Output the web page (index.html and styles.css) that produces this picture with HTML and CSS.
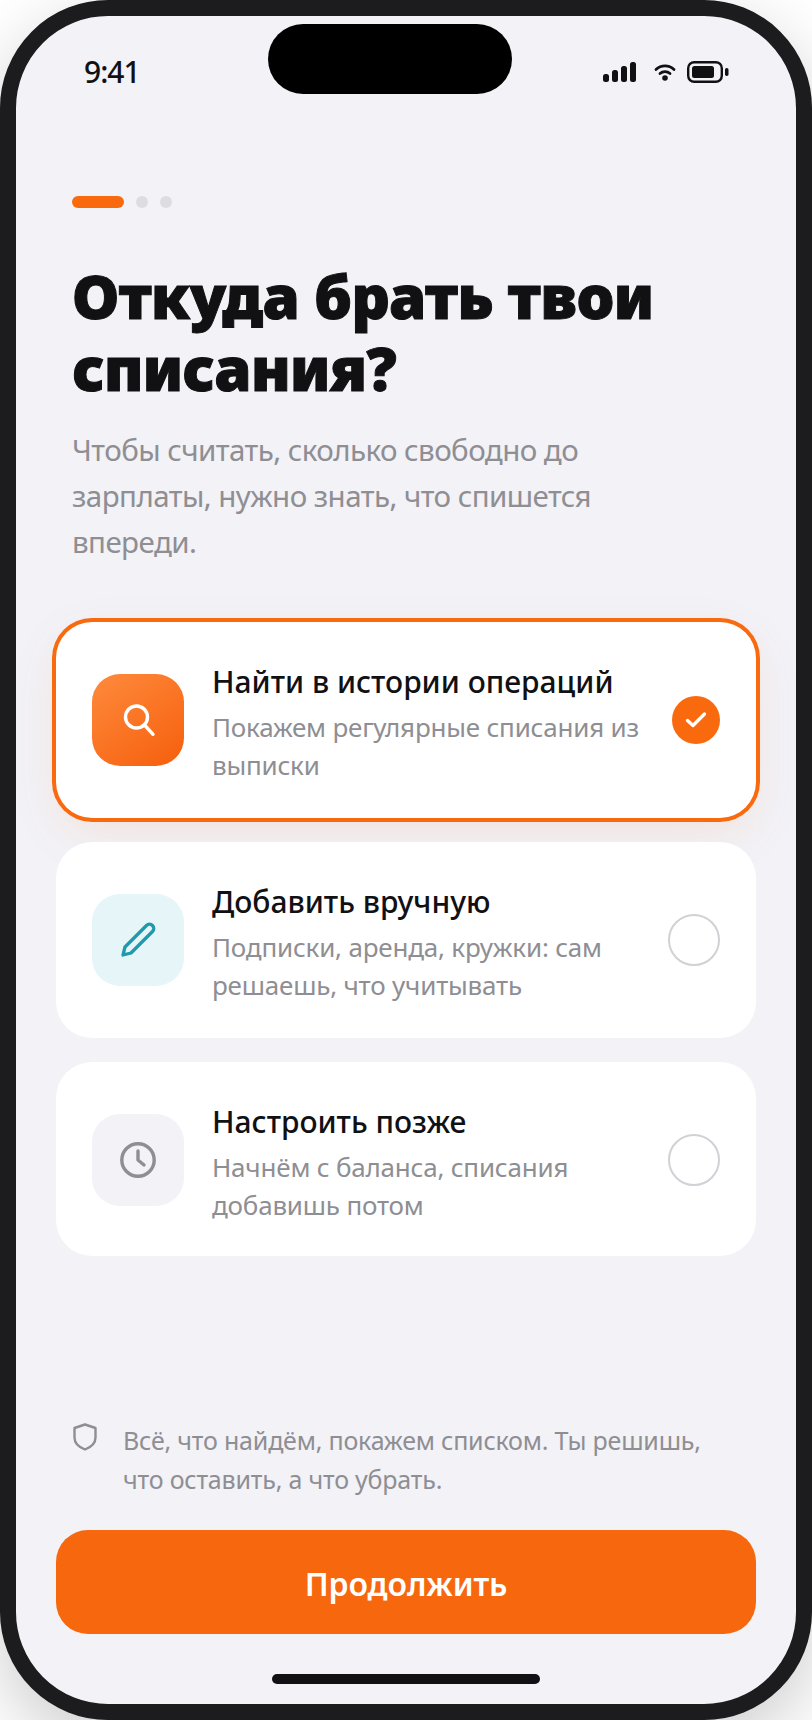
FILE: index.html
```html
<!DOCTYPE html>
<html lang="ru">
<head>
<meta charset="utf-8">
<title>Откуда брать твои списания?</title>
<link rel="stylesheet" href="styles.css">
</head>
<body>
<div class="phone">
  <div class="island"></div>
  <header class="status">
    <span class="time">9:41</span>
    <div class="status-icons">
      <svg class="i-signal" width="34" height="20" viewBox="0 0 34 20"><rect x="0" y="12" width="6" height="8" rx="2.5"/><rect x="9" y="8" width="6" height="12" rx="2.5"/><rect x="18" y="4" width="6" height="16" rx="2.5"/><rect x="27" y="0" width="6" height="20" rx="2.5"/></svg>
      <svg class="i-wifi" width="22" height="18" viewBox="0 0 22 18"><path d="M2 6.5a13 13 0 0 1 18 0M6 10.500a7.400 7.400 0 0 1 10 0" fill="none" stroke="#111114" stroke-width="2.800" stroke-linecap="round"/><circle cx="11" cy="15" r="2.800"/></svg>
      <svg class="i-batt" width="42" height="22" viewBox="0 0 42 22"><rect x="1.200" y="1.200" width="33.600" height="19.600" rx="6" fill="none" stroke="#111114" stroke-width="2.400"/><rect x="5" y="5" width="22" height="12" rx="2.500"/><rect x="38" y="7" width="3.500" height="8" rx="1.700"/></svg>
    </div>
  </header>
  <main class="content">
    <div class="progress"><span class="bar"></span><span class="dot"></span><span class="dot"></span></div>
    <h1 class="title">Откуда брать твои списания?</h1>
    <p class="lead">Чтобы считать, сколько свободно до зарплаты, нужно знать, что спишется впереди.</p>
    <div class="options">
      <div class="card card-on">
        <div class="ico ico-orange"><svg width="36" height="36" viewBox="0 0 36 36" fill="none" stroke="#fff" stroke-width="3.400" stroke-linecap="round"><circle cx="16.500" cy="15" r="11"/><path d="M25 23.500l8 8.800"/></svg></div>
        <div class="txt"><div class="t">Найти в истории операций</div><div class="s">Покажем регулярные списания из выписки</div></div>
        <div class="check"><svg width="22" height="18" viewBox="0 0 22 18" fill="none" stroke="#fff" stroke-width="3.400" stroke-linecap="round" stroke-linejoin="round"><path d="M2.500 9.500l5.500 5L19.500 3"/></svg></div>
      </div>
      <div class="card">
        <div class="ico ico-teal"><svg width="36" height="36" viewBox="0 0 36 36" fill="none" stroke="#2199ad" stroke-width="3.300" stroke-linecap="round" stroke-linejoin="round"><path d="M3 33L5 25 26.500 3.500a4.240 4.240 0 0 1 6 6L11 31z"/></svg></div>
        <div class="txt"><div class="t">Добавить вручную</div><div class="s">Подписки, аренда, кружки: сам решаешь, что учитывать</div></div>
        <div class="radio"></div>
      </div>
      <div class="card card-short">
        <div class="ico ico-gray"><svg width="36" height="36" viewBox="0 0 36 36" fill="none" stroke="#8e8e93" stroke-width="3.400" stroke-linecap="round" stroke-linejoin="round"><circle cx="18" cy="18" r="16.200"/><path d="M18 9v9l6 5"/></svg></div>
        <div class="txt"><div class="t">Настроить позже</div><div class="s">Начнём с баланса, списания добавишь потом</div></div>
        <div class="radio"></div>
      </div>
    </div>
    <div class="note">
      <svg class="i-shield" width="24" height="28" viewBox="0 0 24 28" fill="none" stroke="#8e8e93" stroke-width="2.400" stroke-linejoin="round"><path d="M12 1.500L22.500 5v9.500c0 5.500-4 9.500-10.500 12C5.500 24 1.500 20 1.500 14.500V5z"/></svg>
      <p class="note-text">Всё, что найдём, покажем списком. Ты решишь, что оставить, а что убрать.</p>
    </div>
    <button class="cta">Продолжить</button>
    <div class="home"></div>
  </main>
</div>
</body>
</html>
```

FILE: styles.css
```css
* { box-sizing: border-box; margin: 0; padding: 0; }
html, body { width: 812px; height: 1720px; background: #fff; overflow: hidden; }
body { font-family: "Noto Sans", "Open Sans", sans-serif; color: #111114; }
.phone {
  position: relative;
  width: 812px;
  height: 1720px;
  background: #f2f2f7;
  border: 16px solid #1c1c1e;
  border-radius: 108px;
  box-shadow: 0 24px 70px rgba(0, 0, 0, 0.2);
  overflow: hidden;
  display: flex;
  flex-direction: column;
}
.island {
  position: absolute;
  left: 252px;
  top: 8px;
  width: 244px;
  height: 70px;
  border-radius: 35px;
  background: #000;
}
.status {
  display: flex;
  justify-content: space-between;
  align-items: center;
  height: 72px;
  padding: 40px 67px 0 68px;
}
.time { font-size: 30px; font-weight: 500; letter-spacing: -1px; line-height: 36px; }
.status-icons { display: flex; align-items: center; }
.status-icons svg { fill: #111114; display: block; }
.i-wifi { margin-left: 17px; }
.i-batt { margin-left: 11px; }
.content { flex: 1; display: flex; flex-direction: column; padding: 108px 40px 0; }
.progress { display: flex; gap: 12px; padding-left: 16px; }
.bar { width: 52px; height: 12px; border-radius: 6px; background: #f9690e; }
.dot { width: 12px; height: 12px; border-radius: 50%; background: #dcdce1; }
.title {
  font-size: 60px;
  line-height: 72px;
  font-weight: 900;
  letter-spacing: -0.650px;
  -webkit-text-stroke: 1px #111114;
  color: #111114;
  padding-left: 16px;
  margin-top: 52px;
  width: 640px;
}
.lead {
  font-size: 29.500px;
  line-height: 46px;
  letter-spacing: -0.550px;
  color: #8e8e93;
  padding-left: 16px;
  margin-top: 23px;
  width: 580px;
}
.options { display: flex; flex-direction: column; gap: 24px; margin-top: 57px; }
.card {
  display: flex;
  align-items: center;
  height: 196px;
  padding: 0 36px;
  background: #fff;
  border-radius: 36px;
}
.card-short { height: 194px; padding-top: 2px; }
.card-on { box-shadow: 0 0 0 4px #f9690e, 0 16px 48px rgba(249, 105, 14, 0.1); }
.ico {
  flex: none;
  width: 92px;
  height: 92px;
  border-radius: 28px;
  display: flex;
  align-items: center;
  justify-content: center;
}
.ico-orange { background: linear-gradient(145deg, #ff8a3d, #f55f0c); }
.ico-teal { background: #e5f5f8; }
.ico-gray { background: #f2f2f7; }
.txt { flex: 1; margin-left: 28px; min-width: 0; padding-top: 6px; }
.t { font-size: 30px; line-height: 38px; font-weight: 500; color: #111114; }
.s { font-size: 26px; line-height: 38px; letter-spacing: -0.200px; color: #8e8e93; margin-top: 7px; padding-right: 20px; }
.check {
  flex: none;
  width: 48px;
  height: 48px;
  border-radius: 50%;
  background: #f9690e;
  display: flex;
  align-items: center;
  justify-content: center;
}
.radio { flex: none; width: 52px; height: 52px; border: 2px solid #d1d1d6; border-radius: 50%; }
.note { display: flex; gap: 26px; padding: 0 40px 0 17px; margin-top: auto; }
.i-shield { flex: none; }
.note-text { font-size: 25px; line-height: 38.500px; letter-spacing: -0.200px; color: #8e8e93; margin-top: -2px; }
.cta {
  margin-top: 32px;
  height: 104px;
  flex: none;
  border: 0;
  border-radius: 32px;
  background: #f7670d;
  color: #fff;
  font-family: inherit;
  font-size: 32px;
  font-weight: 600;
  letter-spacing: -0.100px;
  padding-top: 2px;
}
.home { width: 268px; height: 10px; border-radius: 5px; background: #111114; align-self: center; margin: 40px 0 20px; }
```
